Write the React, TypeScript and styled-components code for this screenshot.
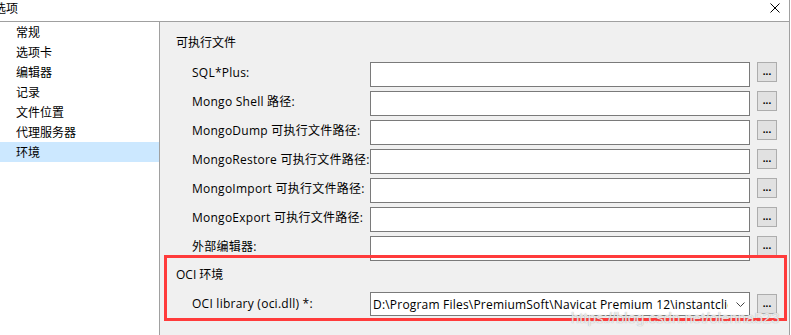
import React from "react";
import styled, { createGlobalStyle } from "styled-components";

const GlobalStyle = createGlobalStyle`
  html, body {
    margin: 0;
    padding: 0;
    background: #fff;
    overflow: hidden;
  }
  body {
    font-family: "Open Sans", "Noto Sans CJK SC", sans-serif;
    font-size: 12px;
    color: #000;
  }
`;

const Window = styled.div`
  position: relative;
  width: 790px;
  height: 335px;
  box-sizing: border-box;
  border-right: 1px solid #a0a0a0;
  display: flex;
  flex-direction: column;
  background: #fff;
`;

const TitleBar = styled.div`
  height: 21px;
  border-bottom: 1px solid #a0a0a0;
  display: flex;
  align-items: center;
  justify-content: space-between;
  padding: 0 9px 0 0;
  font-size: 12px;
  line-height: 16px;
`;

const Title = styled.span`
  margin-left: -6px;
  margin-top: -6px;
  font-family: "Noto Sans CJK SC", sans-serif;
`;

const CloseIcon = styled.svg`
  width: 10px;
  height: 10px;
  margin-top: -5px;
`;

const Body = styled.div`
  flex: 1;
  display: flex;
  min-height: 0;
`;

const Sidebar = styled.ul`
  width: 159px;
  margin: 0;
  padding: 0;
  list-style: none;
  border-right: 1px solid #a0a0a0;
  background: #fff;
`;

const NavItem = styled.li<{ $active?: boolean }>`
  height: 20px;
  line-height: 20px;
  padding-left: 16px;
  background: ${(p) => (p.$active ? "#cce8ff" : "transparent")};
  font-family: "Noto Sans CJK SC", sans-serif;
  white-space: nowrap;
`;

const Panel = styled.div`
  flex: 1;
  background: #f0f0f0;
  padding: 13px 0 0 16px;
  display: flex;
  flex-direction: column;
`;

const SectionTitle = styled.div<{ $gapAfter: number }>`
  height: 16px;
  line-height: 16px;
  margin-bottom: ${(p) => p.$gapAfter}px;
  white-space: nowrap;
`;

const Rows = styled.div`
  display: flex;
  flex-direction: column;
  gap: 4px;
  padding-left: 16px;
`;

const Row = styled.div`
  display: flex;
  align-items: flex-start;
  height: 25px;
`;

const Label = styled.span`
  width: 178px;
  height: 21px;
  line-height: 21px;
  letter-spacing: 0.25px;
  white-space: nowrap;
  flex-shrink: 0;
`;

const Field = styled.div`
  width: 380px;
  height: 25px;
  box-sizing: border-box;
  border: 1px solid #7a7a7a;
  background: #fff;
  position: relative;
  z-index: 1;
`;

const SelectField = styled(Field)`
  height: 24px;
  margin-top: -1px;
  display: flex;
  align-items: center;
  justify-content: space-between;
  padding: 0 4px 0 2px;
  overflow: hidden;
`;

const SelectText = styled.span`
  white-space: nowrap;
  overflow: hidden;
  font-size: 12px;
  letter-spacing: 0.2px;
`;

const Chevron = styled.svg`
  width: 9px;
  height: 5px;
  flex-shrink: 0;
  margin-left: 8px;
`;

const BrowseButton = styled.button<{ $offset?: number }>`
  width: 20px;
  height: 20px;
  margin: ${(p) => p.$offset ?? 0}px 0 0 7px;
  padding: 0;
  box-sizing: border-box;
  border: 1px solid #adadad;
  background: #e1e1e1;
  font-family: "Liberation Sans", sans-serif;
  font-size: 10px;
  line-height: 14px;
  font-weight: bold;
  color: #000;
  display: flex;
  align-items: center;
  justify-content: center;
`;

const SectionGap = styled.div`
  height: 6px;
`;

const Highlight = styled.div`
  position: absolute;
  left: 164px;
  top: 255px;
  width: 623px;
  height: 66px;
  box-sizing: border-box;
  border: 3px solid #ff3b3b;
  pointer-events: none;
  z-index: 2;
`;

const Watermark = styled.div`
  position: absolute;
  left: 571px;
  top: 308px;
  font-family: "Liberation Sans", sans-serif;
  font-size: 15px;
  line-height: 20px;
  color: rgba(255, 255, 255, 0.8);
  text-shadow: 0 0 1px rgba(110, 110, 110, 0.7);
  white-space: nowrap;
  z-index: 3;
`;

const navItems = ["常规", "选项卡", "编辑器", "记录", "文件位置", "代理服务器", "环境"];

const executables = [
  "SQL*Plus:",
  "Mongo Shell 路径:",
  "MongoDump 可执行文件路径:",
  "MongoRestore 可执行文件路径:",
  "MongoImport 可执行文件路径:",
  "MongoExport 可执行文件路径:",
  "外部编辑器:",
];

function App() {
  return (
    <>
      <GlobalStyle />
      <Window>
        <TitleBar>
          <Title>选项</Title>
          <CloseIcon viewBox="0 0 10 10">
            <path d="M0.5 0.5 L9.5 9.5 M9.5 0.5 L0.5 9.5" stroke="#000" strokeWidth="1" fill="none" />
          </CloseIcon>
        </TitleBar>
        <Body>
          <Sidebar>
            {navItems.map((item) => (
              <NavItem key={item} $active={item === "环境"}>
                {item}
              </NavItem>
            ))}
          </Sidebar>
          <Panel>
            <SectionTitle $gapAfter={11}>可执行文件</SectionTitle>
            <Rows>
              {executables.map((label) => (
                <Row key={label}>
                  <Label>{label}</Label>
                  <Field />
                  <BrowseButton>...</BrowseButton>
                </Row>
              ))}
            </Rows>
            <SectionGap />
            <SectionTitle $gapAfter={10}>OCI 环境</SectionTitle>
            <Rows>
              <Row>
                <Label>OCI library (oci.dll) *:</Label>
                <SelectField>
                  <SelectText>D:\Program Files\PremiumSoft\Navicat Premium 12\instantclie</SelectText>
                  <Chevron viewBox="0 0 9 5">
                    <polyline points="0.5,0.5 4.5,4.5 8.5,0.5" stroke="#444" strokeWidth="1" fill="none" />
                  </Chevron>
                </SelectField>
                <BrowseButton $offset={1}>...</BrowseButton>
              </Row>
            </Rows>
          </Panel>
        </Body>
        <Highlight />
        <Watermark>https://blog.csdn.net/olenna523</Watermark>
      </Window>
    </>
  );
}

export default App;
